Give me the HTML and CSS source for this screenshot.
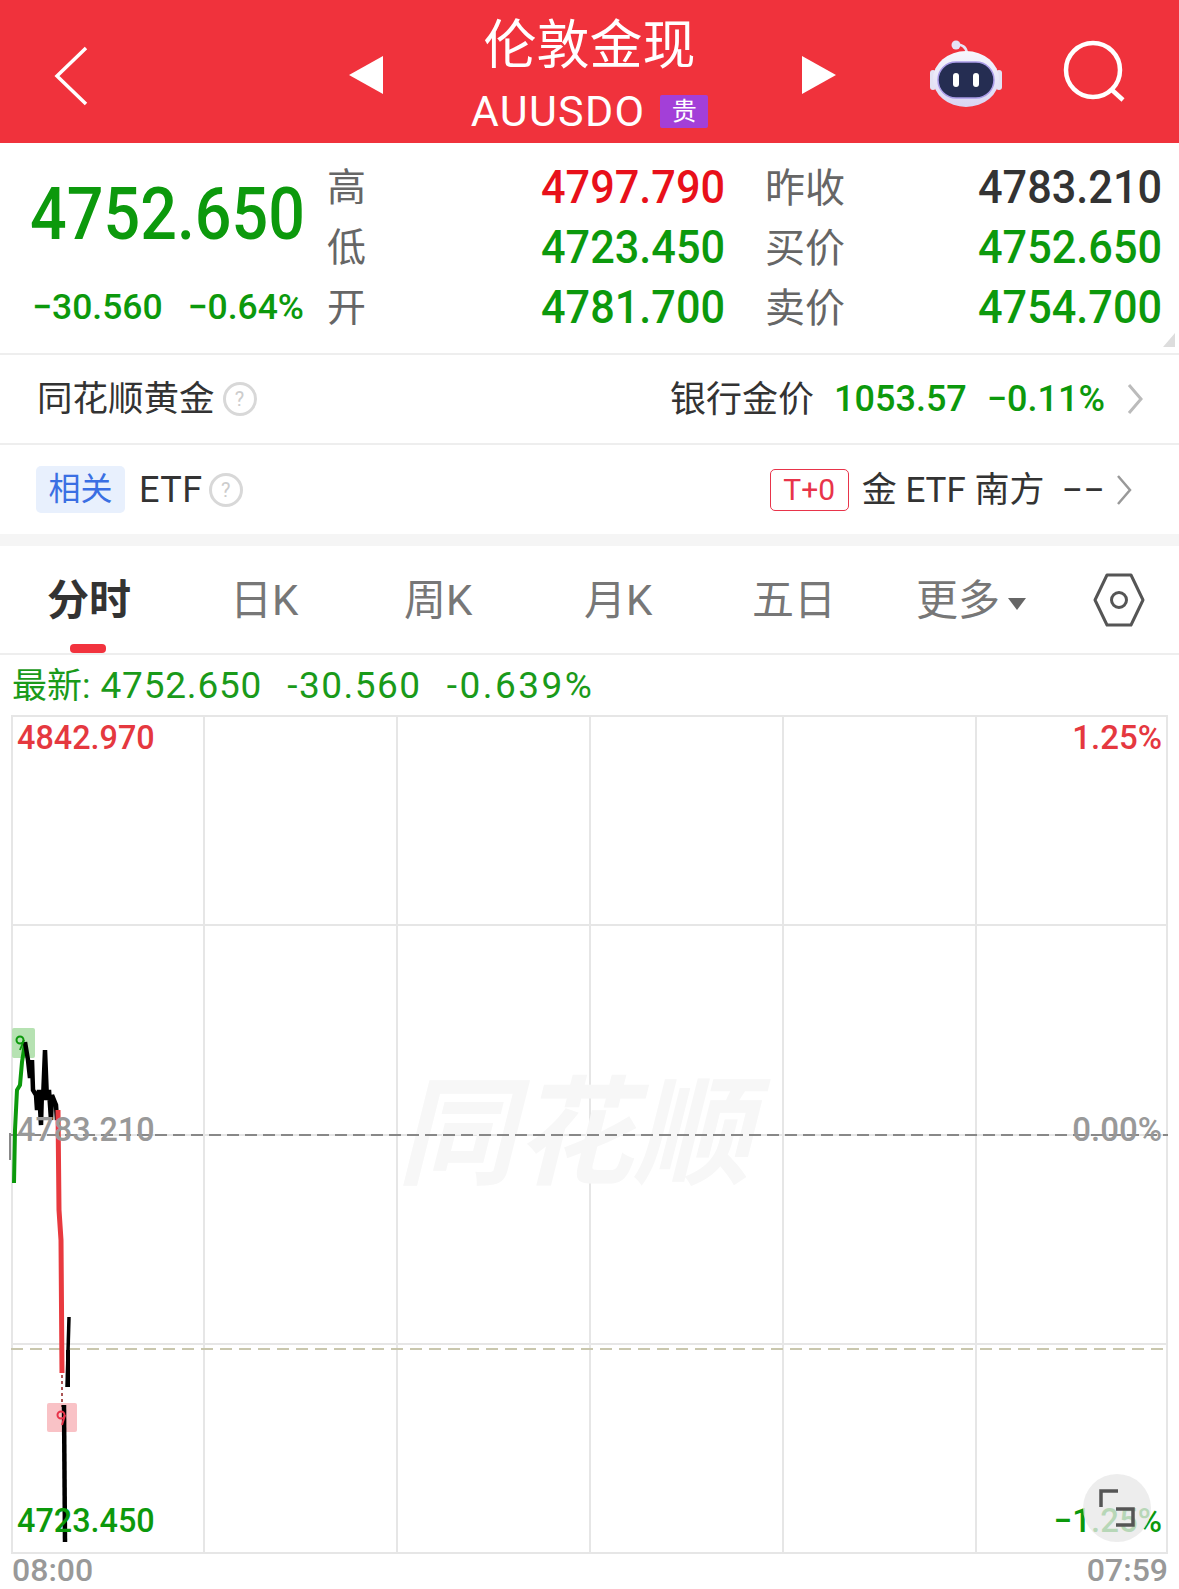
FILE: index.html
```html
<!DOCTYPE html>
<html lang="zh-CN">
<head>
    <meta charset="UTF-8">
    <title>伦敦金现</title>
    <link rel="stylesheet" href="styles.css">
</head>
<body>
    <header class="topbar">
        <div class="topbar-left">
            <svg class="back" width="34" height="60" viewBox="0 0 34 60"><path d="M32 2 3 30l29 28" fill="none" stroke="#fff" stroke-width="3.5"/></svg>
        </div>
        <div class="tri tri-left"></div>
        <div class="title-box">
            <div class="title">伦敦金现</div>
            <div class="subtitle">AUUSDO<span class="tag-gui">贵</span></div>
        </div>
        <div class="tri tri-right"></div>
        <div class="topbar-right">
            <svg class="robot" width="74" height="74" viewBox="0 0 74 74">
                <defs>
                    <linearGradient id="robotHead" x1="0" y1="0" x2="0" y2="1">
                        <stop offset="0" stop-color="#f7f7fd"/>
                        <stop offset="1" stop-color="#d9d5f3"/>
                    </linearGradient>
                </defs>
                <path d="M27 9c6-1 10 2 11 8" fill="none" stroke="#e6e3f5" stroke-width="2.5"/>
                <circle cx="27" cy="9" r="4.5" fill="#e6e3f5"/>
                <rect x="1" y="34" width="6" height="20" rx="3" fill="#e3e2f3"/>
                <rect x="67" y="34" width="6" height="20" rx="3" fill="#e3e2f3"/>
                <ellipse cx="37" cy="43" rx="33" ry="28" fill="url(#robotHead)"/>
                <rect x="9" y="26" width="56" height="36" rx="18" fill="#252d52" stroke="#a99be8" stroke-width="1.5"/>
                <rect x="24" y="37" width="6" height="14" rx="3" fill="#fff"/>
                <rect x="44" y="37" width="6" height="14" rx="3" fill="#fff"/>
            </svg>
            <svg class="search" width="64" height="68" viewBox="0 0 64 68">
                <circle cx="30" cy="30" r="27" fill="none" stroke="#fff" stroke-width="4.5"/>
                <path d="M49 50l11 10" stroke="#fff" stroke-width="4.5" fill="none"/>
            </svg>
        </div>
    </header>

    <section class="quote">
        <div class="quote-main">
            <div class="big-price">4752.650</div>
            <div class="big-change"><span>−30.560</span><span>−0.64%</span></div>
        </div>
        <div class="quote-table">
            <div class="qlabel">高</div><div class="qval"><span class="red">4797.790</span></div>
            <div class="qlabel second">昨收</div><div class="qval"><span class="dark">4783.210</span></div>
            <div class="qlabel">低</div><div class="qval"><span>4723.450</span></div>
            <div class="qlabel second">买价</div><div class="qval"><span>4752.650</span></div>
            <div class="qlabel">开</div><div class="qval"><span>4781.700</span></div>
            <div class="qlabel second">卖价</div><div class="qval"><span>4754.700</span></div>
        </div>
        <div class="corner"></div>
    </section>

    <section class="info-row">
        <div class="info-left"><span class="cn-text">同花顺黄金</span><span class="help">?</span></div>
        <div class="info-right">
            <span class="cn-text">银行金价</span>
            <span class="info-num">1053.57</span>
            <span class="info-num">−0.11%</span>
            <svg class="chev" width="16" height="30" viewBox="0 0 16 30"><path d="M2 1l12 14L2 29" fill="none" stroke="#bbb" stroke-width="3"/></svg>
        </div>
    </section>

    <section class="info-row etf-row">
        <div class="info-left"><span class="tag-rel">相关</span><span class="etf">ETF</span><span class="help">?</span></div>
        <div class="info-right etf-right">
            <span class="tag-t0">T+0</span>
            <span class="cn-text">金 ETF 南方</span>
            <span class="dashes">−−</span>
            <svg class="chev" width="16" height="30" viewBox="0 0 16 30"><path d="M2 1l12 14L2 29" fill="none" stroke="#999" stroke-width="2.5"/></svg>
        </div>
    </section>

    <nav class="tabs">
        <div class="tab active">分时</div>
        <div class="tab">日K</div>
        <div class="tab">周K</div>
        <div class="tab">月K</div>
        <div class="tab">五日</div>
        <div class="tab">更多<i class="caret"></i></div>
        <svg class="hex" width="52" height="56" viewBox="0 0 52 56">
            <path d="M14 3h24l12 25-12 25H14L2 28z" fill="none" stroke="#555" stroke-width="3" stroke-linejoin="round"/>
            <circle cx="26" cy="28" r="7.5" fill="none" stroke="#555" stroke-width="3"/>
        </svg>
    </nav>

    <div class="latest">
        <span><span class="l-label">最新:</span> 4752.650</span><span class="l-change">-30.560</span><span class="l-pct">-0.639%</span>
    </div>

    <div class="chart">
        <div class="grid">
            <i></i><i></i><i></i><i></i><i></i><i></i>
            <i></i><i></i><i></i><i></i><i></i><i></i>
            <i></i><i></i><i></i><i></i><i></i><i></i>
            <i></i><i></i><i></i><i></i><i></i><i></i>
        </div>
        <div class="watermark">同花顺</div>
        <svg class="plot" width="1157" height="839" viewBox="11 715 1157 839">
            <path d="M11 1135H1168" stroke="#888" stroke-width="2" stroke-dasharray="12 6" fill="none"/>
            <path d="M11 1349H1168" stroke="#c9c7ae" stroke-width="2" stroke-dasharray="12 7" fill="none"/>
            <path d="M10 1133v27" stroke="#888" stroke-width="2"/>
            <rect x="12" y="1028" width="23" height="30" rx="2" fill="#b6e2b2"/>
            <rect x="47" y="1403" width="30" height="29" rx="2" fill="#f9c2c6"/>
            <path d="M14 1183l1-53 2-40 3-5 2-23 3-19" fill="none" stroke="#0c990c" stroke-width="4"/>
            <path d="M25 1042l3 18 2 18 2-18 1 30 3 5 1 15 2-20 2 35 1-35 1 10 2-50 2 50 2-10 2 30 1-25 4 10 1 15" fill="none" stroke="#000" stroke-width="4.5"/>
            <path d="M58 1110l1 100 2 30 1 133" fill="none" stroke="#e83a3f" stroke-width="5"/>
            <path d="M62 1375v32" fill="none" stroke="#a55" stroke-width="2" stroke-dasharray="3 3"/>
            <path d="M64 1405l1 137" fill="none" stroke="#000" stroke-width="4.5"/>
            <path d="M67 1387l1-35 1-35" fill="none" stroke="#000" stroke-width="3.5"/>
            <path d="M66 1350h4v37h-4z" fill="#000"/>
            <circle cx="20" cy="1040" r="3.5" fill="none" stroke="#0c990c" stroke-width="2"/>
            <path d="M24 1040l-4 10" stroke="#0c990c" stroke-width="2" fill="none"/>
            <circle cx="61" cy="1415" r="3.5" fill="none" stroke="#e8344a" stroke-width="2"/>
            <path d="M65 1415l-3 10" stroke="#e8344a" stroke-width="2" fill="none"/>
        </svg>
        <div class="axis-left">
            <span class="c-red">4842.970</span>
            <span class="c-gray">4783.210</span>
            <span class="c-green">4723.450</span>
        </div>
        <div class="axis-right">
            <span class="c-red">1.25%</span>
            <span class="c-gray">0.00%</span>
            <span class="c-green">−1.25%</span>
        </div>
        <div class="fullscreen">
            <svg width="68" height="68" viewBox="0 0 68 68">
                <path d="M18 33V17h17M33 35h17v16H33" fill="none" stroke="#555" stroke-width="3.5"/>
            </svg>
        </div>
    </div>

    <div class="times"><span>08:00</span><span>07:59</span></div>
</body>
</html>
```

FILE: styles.css
```css
* {
    box-sizing: border-box;
}

body {
    margin: 0;
    width: 1179px;
    height: 1589px;
    overflow: hidden;
    background-color: #fff;
    font-family: Roboto, "Noto Sans CJK SC", sans-serif;
    color: #333;
}

/* top bar */
.topbar {
    display: flex;
    align-items: center;
    height: 143px;
    background-color: #f0323c;
    color: #fff;
}

.topbar-left {
    width: 349px;
    padding-left: 54px;
    display: flex;
    align-items: center;
}

.back {
    margin-top: 8px;
}

.tri {
    width: 0;
    height: 0;
    margin-top: 6px;
    border-top: 19px solid transparent;
    border-bottom: 19px solid transparent;
}

.tri-left {
    border-right: 34px solid #fff;
}

.tri-right {
    border-left: 34px solid #fff;
}

.title-box {
    flex: 1;
    align-self: flex-start;
    text-align: center;
    padding-right: 6px;
}

.title {
    font-size: 53px;
    line-height: 60px;
    margin-top: 16px;
}

.subtitle {
    display: flex;
    justify-content: center;
    align-items: center;
    font-size: 43px;
    line-height: 46px;
    letter-spacing: 1.3px;
    margin-top: 12px;
}

.tag-gui {
    width: 48px;
    height: 33px;
    margin-left: 15px;
    background-color: #a33fd8;
    border-radius: 2px;
    font-size: 25px;
    line-height: 33px;
    letter-spacing: 0;
    text-align: center;
}

.topbar-right {
    display: flex;
    align-items: center;
    width: 343px;
    padding-left: 93px;
}

.robot {
    margin-top: 2px;
}

.search {
    margin-left: 60px;
    margin-top: 4px;
}

/* quote block */
.quote {
    position: relative;
    display: flex;
    height: 212px;
    padding-left: 30px;
    border-bottom: 2px solid #eee;
    color: #0c990c;
}

.quote-main {
    width: 297px;
}

.big-price {
    margin-top: 29px;
    font-size: 73px;
    line-height: 84px;
    font-weight: 500;
    transform: scaleX(0.885);
    transform-origin: left;
    white-space: nowrap;
}

.big-change {
    display: flex;
    justify-content: space-between;
    width: 272px;
    margin-top: 31px;
    margin-left: 2px;
    font-size: 35.5px;
    line-height: 40px;
    font-weight: 500;
}

.quote-table {
    display: grid;
    grid-template-columns: 62px 336px 120px 317px;
    grid-auto-rows: 60px;
    margin-top: 15px;
}

.qlabel {
    font-size: 39px;
    line-height: 61px;
    color: #666;
}

.qlabel.second {
    padding-left: 40px;
    font-size: 40px;
}

.qval {
    text-align: right;
    font-size: 47px;
    line-height: 57px;
    font-weight: 500;
    white-space: nowrap;
}

.qval span {
    display: inline-block;
    transform: scaleX(0.92);
    transform-origin: right;
}

.qval .red {
    color: #e8101a;
}

.qval .dark {
    color: #333;
}

.corner {
    position: absolute;
    right: 4px;
    bottom: 6px;
    width: 0;
    height: 0;
    border-left: 12px solid transparent;
    border-bottom: 14px solid #ddd;
}

/* info rows */
.info-row {
    display: flex;
    justify-content: space-between;
    align-items: center;
    height: 90px;
    padding: 0 36px 0 37px;
    border-bottom: 2px solid #eee;
    font-size: 36px;
}

.info-left,
.info-right {
    display: flex;
    align-items: center;
    white-space: nowrap;
}

.info-left .cn-text {
    font-size: 35.5px;
}

.cn-text {
    margin-bottom: 7px;
}

.help {
    width: 34px;
    height: 34px;
    margin-left: 8px;
    border: 3px solid #d8d8d8;
    border-radius: 50%;
    color: #ccc;
    font-size: 20px;
    line-height: 28px;
    text-align: center;
}

.info-num {
    margin-left: 20px;
    color: #0c990c;
    font-weight: 500;
    font-size: 36px;
}

.chev {
    margin-left: 22px;
}

.etf-row {
    height: 89px;
    padding: 0 47px 0 36px;
    border-bottom: 0;
    font-size: 35px;
}

.tag-rel {
    width: 89px;
    height: 47px;
    background-color: #e8f0fd;
    border-radius: 5px;
    color: #3a6fe3;
    font-size: 32px;
    line-height: 47px;
    text-align: center;
}

.etf {
    margin-left: 14px;
    font-size: 36px;
    letter-spacing: 0.5px;
}

.etf-row .help {
    margin-left: 6px;
}

.etf-right .chev {
    margin-left: 11px;
}

.tag-t0 {
    width: 79px;
    height: 42px;
    margin-right: 13px;
    border: 1px solid #e8344a;
    border-radius: 5px;
    color: #e8344a;
    font-size: 30px;
    line-height: 40px;
    text-align: center;
}

.dashes {
    margin-left: 17px;
    font-size: 38px;
    color: #333;
}

/* tabs */
.tabs {
    display: grid;
    grid-template-columns: 183px 174px 180px 168px 164px 176px 52px;
    height: 121px;
    padding-left: 47px;
    border-top: 12px solid #f5f5f5;
    border-bottom: 2px solid #eee;
    font-size: 42px;
    color: #777;
}

.tab {
    padding-top: 2px;
    line-height: 105px;
    white-space: nowrap;
}

.tab.active {
    position: relative;
    color: #333;
    font-weight: 700;
}

.tab.active::after {
    content: "";
    position: absolute;
    left: 23px;
    bottom: 0;
    width: 36px;
    height: 9px;
    border-radius: 4px;
    background-color: #f2333e;
}

.caret {
    display: inline-block;
    margin-left: 8px;
    vertical-align: 5px;
    border-left: 9px solid transparent;
    border-right: 9px solid transparent;
    border-top: 12px solid #666;
}

.hex {
    align-self: center;
    margin-left: 1px;
}

/* latest line */
.latest {
    display: flex;
    gap: 25px;
    height: 60px;
    padding-left: 12px;
    color: #1a9a1a;
    font-size: 37px;
    line-height: 62px;
    letter-spacing: 0.8px;
}

.l-label {
    font-size: 35px;
    letter-spacing: 0;
}

.l-change {
    letter-spacing: 1.5px;
}

.l-pct {
    letter-spacing: 2.5px;
}

/* chart */
.chart {
    position: relative;
    width: 1157px;
    height: 839px;
    margin-left: 11px;
}

.grid {
    display: grid;
    grid-template-columns: 192px 193px 193px 193px 193px 1fr;
    grid-template-rows: repeat(4, 1fr);
    height: 100%;
    border-top: 2px solid #e6e6e6;
    border-right: 2px solid #e6e6e6;
}

.grid i {
    border-left: 2px solid #e6e6e6;
    border-bottom: 2px solid #e6e6e6;
}

.watermark {
    position: absolute;
    left: 386px;
    top: 350px;
    font-size: 118px;
    line-height: 140px;
    font-weight: 700;
    font-style: italic;
    color: #f7f7f7;
    white-space: nowrap;
}

.plot {
    position: absolute;
    left: 0;
    top: 0;
    overflow: visible;
}

.axis-left,
.axis-right {
    position: absolute;
    top: 0;
    bottom: 0;
    display: flex;
    flex-direction: column;
    justify-content: space-between;
    padding: 2px 0 12px;
    font-size: 33px;
    line-height: 42px;
    font-weight: 500;
}

.axis-left {
    left: 6px;
}

.axis-left span {
    display: block;
    transform: scaleX(0.98);
    transform-origin: left;
}

.axis-right {
    right: 6px;
    align-items: flex-end;
}

.c-red {
    color: #e5383f;
}

.c-gray {
    color: #999;
}

.c-green {
    color: #0c990c;
}

.fullscreen {
    position: absolute;
    left: 1072px;
    top: 759px;
    width: 68px;
    height: 68px;
    border-radius: 50%;
    background-color: rgba(232, 232, 232, 0.78);
}

.fullscreen svg {
    display: block;
}

.times {
    display: flex;
    justify-content: space-between;
    padding: 0 11px 0 12px;
    font-size: 32px;
    line-height: 32px;
    color: #999;
    font-weight: 500;
}
```
